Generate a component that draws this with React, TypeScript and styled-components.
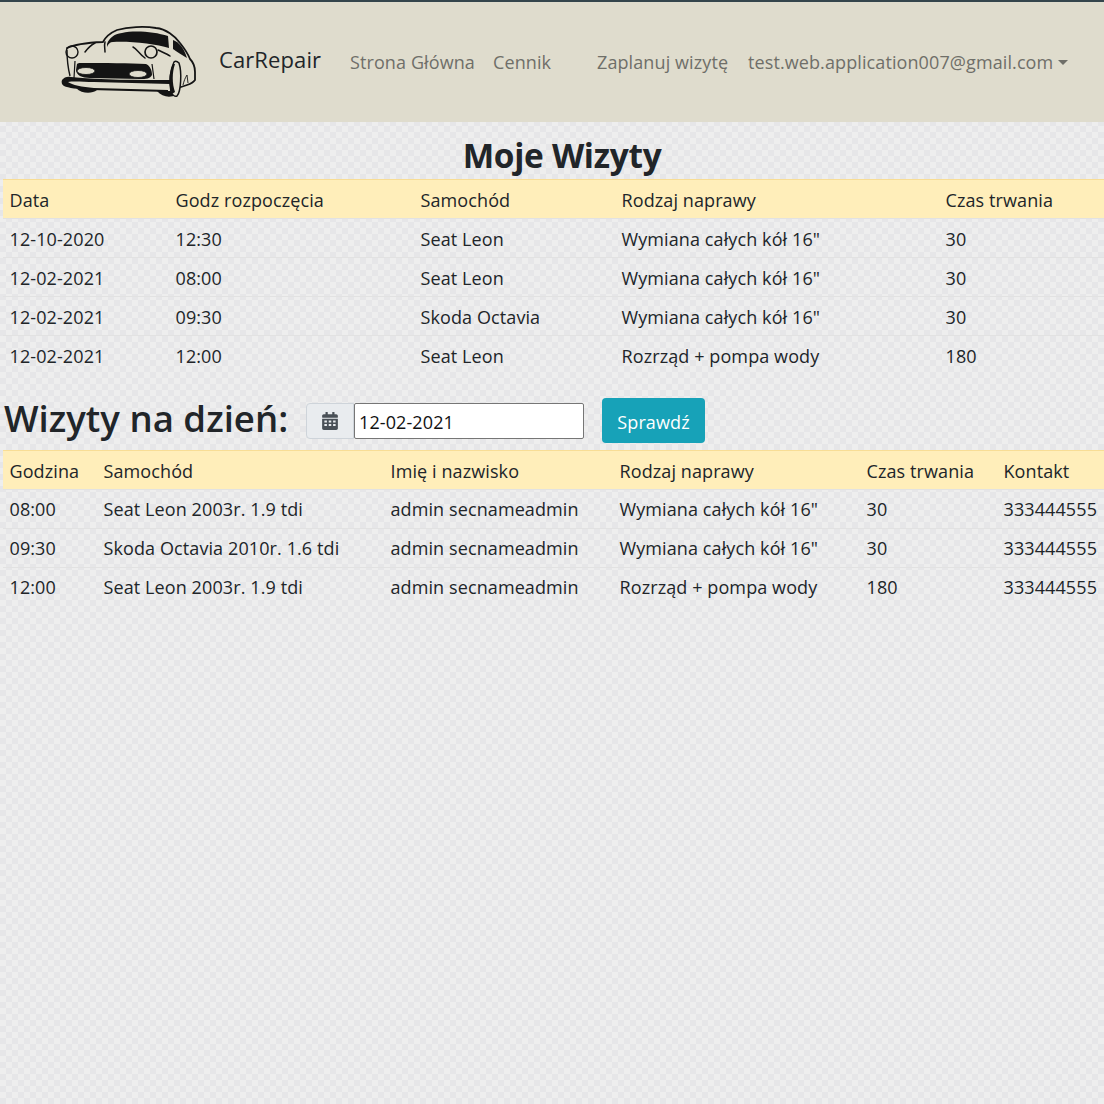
import React from "react";
import styled, { createGlobalStyle } from "styled-components";

const GlobalStyle = createGlobalStyle`
  html, body { margin: 0; padding: 0; }
  body {
    width: 1104px; height: 1104px; overflow: hidden;
    font-family: "Open Sans", "Noto Sans", sans-serif;
    font-size: 18px; letter-spacing: 0.1px; color: #212529;
    background-color: #eeeeee;
    background-image: conic-gradient(#e6e6e8 25%, #eeeeee 0 50%, #e6e6e8 0 75%, #eeeeee 0);
    background-size: 12px 12px;
  }
`;

const Navbar = styled.nav`
  display: flex; align-items: center; box-sizing: border-box;
  height: 122px; padding: 0 0 0 60px;
  border-top: 2px solid #34454c; background: #dfdccd;
`;
const Logo = styled.svg`width: 138px; height: 72px; flex: none;`;
const Brand = styled.span`
  margin: -6px 0 0 21px; font-size: 22px; color: #212529; width: 131px; flex: none;
`;
const NavLink = styled.span<{ $w: number }>`
  width: ${p => p.$w}px; flex: none; white-space: nowrap; color: #6f6f69;
`;
const Caret = styled.i`
  display: inline-block; margin-left: 5px; vertical-align: 4px;
  border-top: 5px solid #6f6f69; border-left: 5px solid transparent; border-right: 5px solid transparent;
`;
const Title = styled.h1`
  margin: 11px 0 0 20px; height: 46px; line-height: 44px; text-align: center;
  font-size: 33.4px; font-weight: 700; letter-spacing: -0.3px; color: #212529;
`;
const Table = styled.table`
  width: 1115px; table-layout: fixed; border-collapse: collapse; margin-left: 3px;
`;
const HeadCell = styled.th`
  box-sizing: border-box; height: 39px; padding: 2px 6.500px 0; text-align: left; font-weight: 400;
  background: #ffeeba; border-top: 1px solid #f8dd95; white-space: nowrap;
`;
const Cell = styled.td`
  box-sizing: border-box; height: 39px; padding: 1px 6.500px 0; white-space: nowrap;
  border-top: 1px solid #e2e2e2;
`;
const DayRow = styled.div`display: flex; align-items: center; height: 46px; margin: 23px 0 6px 4px;`;
const DayTitle = styled.h2`
  margin: -6px 0 0; width: 302px; flex: none; white-space: nowrap;
  font-size: 36.6px; font-weight: 600; letter-spacing: 0; color: #212529;
`;
const InputGroup = styled.div`display: flex; height: 36px;`;
const Addon = styled.div`
  display: flex; align-items: center; justify-content: center; box-sizing: border-box;
  width: 48px; background: #e9ecef; border: 1px solid #ced4da; border-radius: 4px 0 0 4px;
`;
const DateBox = styled.div`
  box-sizing: border-box; width: 230px; padding-left: 4px; line-height: 36px; background: #fff;
  border: 1px solid #767676; border-radius: 2px; color: #111;
`;
const CheckButton = styled.button`
  margin-left: 18px; width: 103px; height: 45px; padding: 3px 0 0; border: 0; border-radius: 4px;
  background: #17a2b8; color: #fff; font: inherit; letter-spacing: inherit;
`;

const mine = [
  ["12-10-2020", "12:30", "Seat Leon", "Wymiana całych kół 16\"", "30"],
  ["12-02-2021", "08:00", "Seat Leon", "Wymiana całych kół 16\"", "30"],
  ["12-02-2021", "09:30", "Skoda Octavia", "Wymiana całych kół 16\"", "30"],
  ["12-02-2021", "12:00", "Seat Leon", "Rozrząd + pompa wody", "180"],
];
const day = [
  ["08:00", "Seat Leon 2003r. 1.9 tdi", "admin secnameadmin", "Wymiana całych kół 16\"", "30", "333444555"],
  ["09:30", "Skoda Octavia 2010r. 1.6 tdi", "admin secnameadmin", "Wymiana całych kół 16\"", "30", "333444555"],
  ["12:00", "Seat Leon 2003r. 1.9 tdi", "admin secnameadmin", "Rozrząd + pompa wody", "180", "333444555"],
];

function DataTable({ cols, head, rows }: { cols: number[]; head: string[]; rows: string[][] }) {
  return (
    <Table>
      <colgroup>{cols.map((c, i) => <col key={i} width={c} />)}</colgroup>
      <thead><tr>{head.map(h => <HeadCell key={h}>{h}</HeadCell>)}</tr></thead>
      <tbody>
        {rows.map((r, i) => <tr key={i}>{r.map((c, j) => <Cell key={j}>{c}</Cell>)}</tr>)}
      </tbody>
    </Table>
  );
}

const BG = "#dfdccd";
const INK = "#141414";

const CarLogo = () => (
  <Logo viewBox="0 0 138 72">
    <path d="M7 22 C13 19 22 17 43 16 C46 10 50 7 57 4 C68 1 84 0 96 2 C106 3 115 10 120 17 C124 22 128 28 130 33 C134 37 135 40 135 46 L135 54 C133 57 130 58 127 59 L118 62" fill="none" stroke={INK} strokeWidth="1.8" strokeLinecap="round" strokeLinejoin="round" />
    <path d="M7 24 C7 34 8 42 10 50" fill="none" stroke={INK} strokeWidth="1.4" />
    <circle cx="12" cy="26" r="6" fill="none" stroke={INK} strokeWidth="1.4" />
    <circle cx="91" cy="26" r="6" fill="none" stroke={INK} strokeWidth="1.7" />
    <path d="M25 26 C28 22 31 19 35 17 M45 16 C44 19 45 23 45 26 M73 21 C77 23 79 28 85 32 M98 24 C102 26 107 28 110 30" fill="none" stroke={INK} strokeWidth="1.500" strokeLinecap="round" />
    <path d="M47 18 C49 12 54 8 62 7 C75 4 95 6 108 10 L109 22 C96 18 70 15 53 16 C50 16 48 18 47 21 Z" fill={INK} />
    <path d="M113 14 C119 16 124 22 127 32 C122 29 117 26 113 23 Z" fill={INK} />
    <path d="M17 38 C18 37 19 37 20 37 C45 37 70 37 86 38 C90 40 92 44 92 49 C90 53 86 53 80 53 L30 52 C22 52 16 49 16 44 Z" fill={INK} />
    <ellipse cx="26" cy="45" rx="9" ry="3.500" fill={BG} stroke={INK} strokeWidth="0.8" />
    <ellipse cx="78" cy="48" rx="9" ry="3.500" fill={BG} stroke={INK} strokeWidth="0.8" />
    <path d="M15 35 L14 52 M92 38 L94 53" stroke={INK} strokeWidth="1.2" />
    <path d="M2 54 C4 51 8 50 11 51 C40 54 80 54 110 54 L110 58 L34 56 C24 56 14 55 8 56 C12 59 22 61 34 62 L108 64 L108 66 L30 64 C18 63 8 62 4 60 C2 59 1 56 2 54 Z" fill={INK} />
    <path d="M16 62 C22 68 32 68 37 64 Z M97 65 C102 71 110 72 116 69 L116 65 Z" fill={INK} />
    <path d="M114 36 C110 44 109 56 111 66 C112 69 115 71 117 70 C121 66 122 46 119 37 C117 35 115 35 114 36 Z" fill={BG} stroke={INK} strokeWidth="1.500" />
    <path d="M113 38 C109 46 108 58 112 68 L115 66 C112 58 112 46 115 38 Z" fill={INK} />
    <path d="M123 59 C124 55 125 52 127 49 L128 57" fill="none" stroke={INK} strokeWidth="0.9" />
  </Logo>
);

const CalendarIcon = () => (
  <svg width="16" height="18" viewBox="0 0 448 512" fill="#495057">
    <path fillRule="evenodd" d="M12 192h424c6.600 0 12 5.400 12 12v260c0 26.500-21.500 48-48 48H48c-26.500 0-48-21.500-48-48V204c0-6.600 5.400-12 12-12zm436-44v-36c0-26.500-21.500-48-48-48h-48V12c0-6.600-5.400-12-12-12h-40c-6.600 0-12 5.400-12 12v52H160V12c0-6.600-5.400-12-12-12h-40c-6.600 0-12 5.400-12 12v52H48C21.500 64 0 85.500 0 112v36c0 6.600 5.400 12 12 12h424c6.600 0 12-5.400 12-12zM64 240v56h72v-56H64zm124 0v56h72v-56h-72zm124 0v56h72v-56h-72zM64 344v56h72v-56H64zm124 0v56h72v-56h-72zm124 0v56h72v-56h-72z" />
  </svg>
);

export default function App() {
  return (
    <>
      <GlobalStyle />
      <Navbar>
        <CarLogo />
        <Brand>CarRepair</Brand>
        <NavLink $w={143}>Strona Główna</NavLink>
        <NavLink $w={104}>Cennik</NavLink>
        <NavLink $w={151}>Zaplanuj wizytę</NavLink>
        <NavLink $w={330}>test.web.application007@gmail.com<Caret /></NavLink>
      </Navbar>
      <Title>Moje Wizyty</Title>
      <DataTable
        cols={[166, 245, 201, 324, 179]}
        head={["Data", "Godz rozpoczęcia", "Samochód", "Rodzaj naprawy", "Czas trwania"]}
        rows={mine}
      />
      <DayRow>
        <DayTitle>Wizyty na dzień:</DayTitle>
        <InputGroup>
          <Addon><CalendarIcon /></Addon>
          <DateBox>12-02-2021</DateBox>
        </InputGroup>
        <CheckButton>Sprawdź</CheckButton>
      </DayRow>
      <DataTable
        cols={[94, 287, 229, 247, 137, 121]}
        head={["Godzina", "Samochód", "Imię i nazwisko", "Rodzaj naprawy", "Czas trwania", "Kontakt"]}
        rows={day}
      />
    </>
  );
}
